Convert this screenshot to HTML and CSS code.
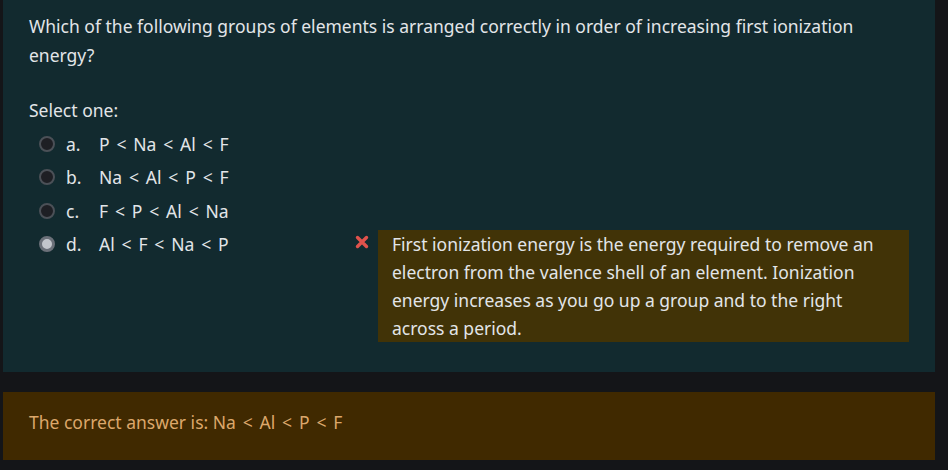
FILE: index.html
```html
<!DOCTYPE html>
<html>
<head>
<meta charset="utf-8">
<link rel="stylesheet" href="styles.css">
</head>
<body>
<div class="panel">
  <div class="qtext">Which of the following groups of elements is arranged correctly in order of increasing first ionization energy?</div>
  <div class="prompt">Select one:</div>
  <div class="answers">
    <div class="opt"><span class="radio"></span><span class="letter">a.</span><span class="val">P &lt; Na &lt; Al &lt; F</span></div>
    <div class="opt"><span class="radio"></span><span class="letter">b.</span><span class="val">Na &lt; Al &lt; P &lt; F</span></div>
    <div class="opt"><span class="radio"></span><span class="letter">c.</span><span class="val">F &lt; P &lt; Al &lt; Na</span></div>
    <div class="opt opt-fb">
      <div class="opt-main"><span class="radio checked"></span><span class="letter">d.</span><span class="val">Al &lt; F &lt; Na &lt; P</span></div>
      <svg class="xicon" viewBox="0 0 14 14" width="14" height="14"><path d="M2.5 2.5 L11.5 11.5 M11.5 2.5 L2.5 11.5" stroke="#e0524c" stroke-width="3.4" stroke-linecap="round"/></svg>
      <div class="feedback">First ionization energy is the energy required to remove an electron from the valence shell of an element. Ionization energy increases as you go up a group and to the right across a period.</div>
    </div>
  </div>
</div>
<div class="rightanswer">The correct answer is: <span class="val">Na &lt; Al &lt; P &lt; F</span></div>
</body>
</html>
```
FILE: styles.css
```css
html, body {
  margin: 0;
  padding: 0;
  background: #141518;
}
body {
  padding: 0 13px 0 3px;
  font-family: "Noto Sans", "Open Sans", sans-serif;
  font-size: 17.5px;
  color: #e2e5e8;
  line-height: 28.5px;
}
.panel {
  background: #122a2f;
  padding: 12px 26px 30px 26px;
}
.qtext {
  width: 860px;
}
.prompt {
  margin-top: 27px;
}
.answers {
  display: flex;
  flex-direction: column;
  gap: 5px;
  margin-top: 5px;
}
.opt {
  display: flex;
  align-items: center;
  height: 28.5px;
  padding-left: 10px;
}
.opt-fb {
  height: auto;
  align-items: flex-start;
  padding-left: 0;
}
.opt-main {
  display: flex;
  align-items: center;
  height: 28.5px;
  padding-left: 10px;
  width: 316px;
  flex: none;
}
.val {
  word-spacing: 2.3px;
}
.radio {
  width: 12px;
  height: 12px;
  border-radius: 50%;
  border: 2px solid #4b5057;
  background: #1e1f24;
  flex: none;
  margin-right: 11px;
}
.radio.checked {
  background: #c3c6cc;
  border: 3px solid #6b7079;
  width: 10px;
  height: 10px;
}
.letter {
  width: 33px;
}
.xicon {
  margin-top: 5px;
  margin-left: 0;
  flex: none;
}
.feedback {
  margin-left: 9px;
  margin-top: 0;
  background: #413307;
  width: 504px;
  padding: 0 14px;
  line-height: 28px;
}
.rightanswer {
  margin-top: 20px;
  background: #402900;
  color: #dca76b;
  padding: 16px 26px 24px;
  line-height: 28px;
}
```
